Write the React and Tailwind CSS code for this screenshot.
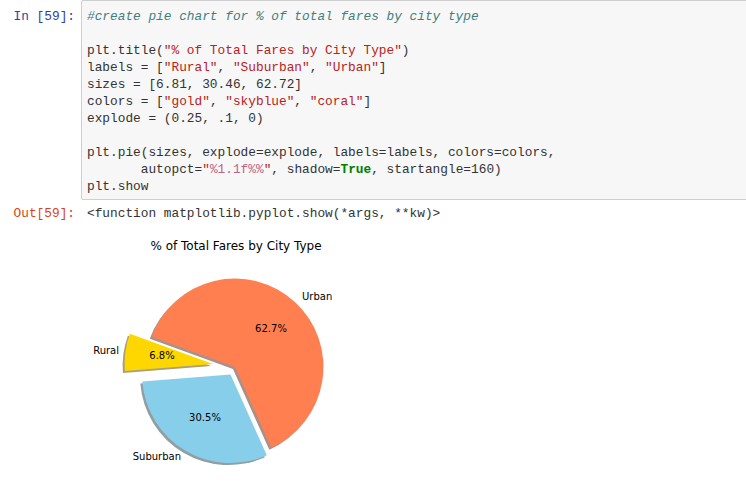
import React from 'react';

const mono = { fontFamily: '"Liberation Mono", "DejaVu Sans Mono", monospace' };
const sans = '"DejaVu Sans", sans-serif';

const Str = ({ children }) => <span className="text-[#ba2121]">{children}</span>;

const codeLines = [
  <span className="italic text-[#408080]">#create pie chart for % of total fares by city type</span>,
  '',
  <>plt.title(<Str>"% of Total Fares by City Type"</Str>)</>,
  <>labels = [<Str>"Rural"</Str>, <Str>"Suburban"</Str>, <Str>"Urban"</Str>]</>,
  <>sizes = [6.81, 30.46, 62.72]</>,
  <>colors = [<Str>"gold"</Str>, <Str>"skyblue"</Str>, <Str>"coral"</Str>]</>,
  <>explode = (0.25, .1, 0)</>,
  '',
  <>plt.pie(sizes, explode=explode, labels=labels, colors=colors,</>,
  <>
    {'       autopct='}
    <Str>"</Str>
    <span className="text-[#bb6688]">%1.1f%%</span>
    <Str>"</Str>, shadow=<span className="font-bold text-[#008000]">True</span>, startangle=160)
  </>,
  <>plt.show</>,
];

const wedges = [
  { name: 'urban', fill: '#ff7f50', shadow: '#4d2618', d: 'M235 367 L271.3 447.7 A88.5 88.5 0 1 0 151.8 336.7 Z' },
  { name: 'rural', fill: '#ffd700', shadow: '#4d4100', d: 'M213.1 364 L129.9 333.7 A88.5 88.5 0 0 0 124.9 371 Z' },
  { name: 'suburban', fill: '#87ceeb', shadow: '#283e46', d: 'M230.5 374.6 L142.3 381.6 A88.5 88.5 0 0 0 266.8 455.3 Z' },
];

const PieChart = () => (
  <svg width="280" height="260" viewBox="80 226 280 260" className="block ml-[80px] mt-[4px]">
    <text x="236" y="250" textAnchor="middle" fontSize="12" fontFamily={sans} fill="#000">
      % of Total Fares by City Type
    </text>
    {wedges.map((w) => (
      <g key={w.name}>
        <path d={w.d} fill={w.shadow} opacity="0.5" transform="translate(-2 2)" />
        <path d={w.d} fill={w.fill} />
      </g>
    ))}
    <g fontSize="10" fontFamily={sans} fill="#000" dominantBaseline="central">
      <text x="119" y="350" textAnchor="end">Rural</text>
      <text x="162" y="355" textAnchor="middle">6.8%</text>
      <text x="181" y="456" textAnchor="end">Suburban</text>
      <text x="205" y="417" textAnchor="middle">30.5%</text>
      <text x="302" y="296">Urban</text>
      <text x="271" y="328" textAnchor="middle">62.7%</text>
    </g>
  </svg>
);

export default function App() {
  return (
    <div className="w-[746px] h-[491px] overflow-hidden bg-white text-[#333]" style={mono}>
      <div className="flex">
        <div className="w-[81px] shrink-0 pr-[6px] pt-[8px] text-right text-[12.8px] leading-[17px] text-[#303f9f]">
          In [59]:
        </div>
        <div className="w-[700px] shrink-0 bg-[#f7f7f7] border border-[#cfcfcf] rounded-[2px] pl-[5px] pt-[7px] pb-[4px] text-[12.8px] leading-[17px] whitespace-pre">
          {codeLines.map((line, i) => (
            <div key={i} className="h-[17px]">{line}</div>
          ))}
        </div>
      </div>
      <div className="flex mt-[5px]">
        <div className="w-[81px] shrink-0 pr-[6px] text-right text-[12.8px] leading-[17px] text-[#d84315]">
          Out[59]:
        </div>
        <div className="pl-[6px] text-[12.8px] leading-[17px] whitespace-pre">
          {'<function matplotlib.pyplot.show(*args, **kw)>'}
        </div>
      </div>
      <PieChart />
    </div>
  );
}
